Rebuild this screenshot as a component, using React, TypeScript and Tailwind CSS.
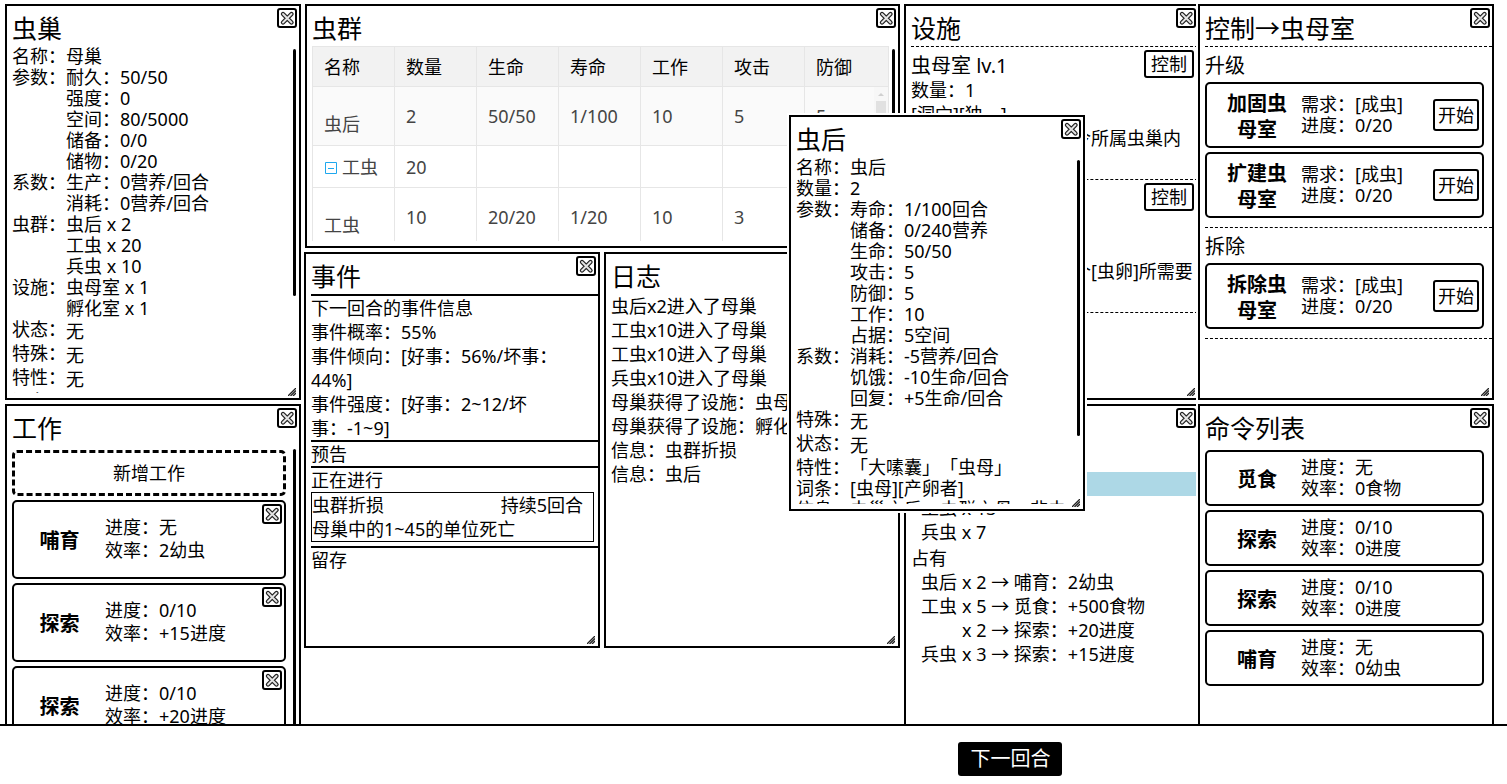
import { ReactNode } from "react";
import { clsx } from "clsx";

function CloseButton({ label }: { label: string }) {
  return (
    <button
      type="button"
      aria-label={label}
      className="absolute top-0.5 right-0.5 flex size-5 items-center justify-center rounded-[3px] border-2 border-black bg-white"
    >
      <svg viewBox="0 0 16 16" className="size-4 shrink-0" fill="none" strokeLinecap="round">
        <path d="M4 4L12.5 12.5M12.5 4L4 12.5" stroke="#222222" strokeWidth="4.4" />
        <path d="M4 4L12.5 12.5M12.5 4L4 12.5" stroke="#e4e4e4" strokeWidth="1.9" />
      </svg>
    </button>
  );
}

function ResizeGrip() {
  return (
    <svg viewBox="0 0 8 8" className="absolute right-[3px] bottom-[2px] size-2" stroke="#222222" strokeWidth="1.3">
      <path d="M0 8L8 0M2.5 8L8 2.5M5 8L8 5" />
    </svg>
  );
}

type WindowProps = {
  title?: string;
  place: string;
  thumb?: string;
  children: ReactNode;
};

function Window({ title, place, thumb, children }: WindowProps) {
  return (
    <section
      className={clsx(
        "absolute flex flex-col overflow-hidden border-2 border-black bg-white py-[5px] pl-[5px] shadow-[0_0_0_2px_white]",
        place,
      )}
    >
      <h2 className="h-[35px] shrink-0 text-[25px] leading-[34px]">{title}</h2>
      <div className="min-h-0 flex-1 overflow-hidden">{children}</div>
      {thumb && <div className={clsx("absolute top-[43px] right-[3px] w-[3px] rounded-full bg-black", thumb)} />}
      <CloseButton label="关闭" />
      <ResizeGrip />
    </section>
  );
}

type Entry = { label: string; lines: string[]; tall?: boolean };

const nestEntries: Entry[] = [
  { label: "名称", lines: ["母巢"] },
  { label: "参数", lines: ["耐久：50/50", "强度：0", "空间：80/5000", "储备：0/0", "储物：0/20"] },
  { label: "系数", lines: ["生产：0营养/回合", "消耗：0营养/回合"] },
  { label: "虫群", lines: ["虫后 x 2", "工虫 x 20", "兵虫 x 10"] },
  { label: "设施", lines: ["虫母室 x 1", "孵化室 x 1"] },
  { label: "状态", lines: ["无"], tall: true },
  { label: "特殊", lines: ["无"], tall: true },
  { label: "特性", lines: ["无"], tall: true },
  { label: "词条", lines: ["无"], tall: true },
];

const queenEntries: Entry[] = [
  { label: "名称", lines: ["虫后"] },
  { label: "数量", lines: ["2"] },
  {
    label: "参数",
    lines: ["寿命：1/100回合", "储备：0/240营养", "生命：50/50", "攻击：5", "防御：5", "工作：10", "占据：5空间"],
  },
  { label: "系数", lines: ["消耗：-5营养/回合", "饥饿：-10生命/回合", "回复：+5生命/回合"] },
  { label: "特殊", lines: ["无"], tall: true },
  { label: "状态", lines: ["无"], tall: true },
  { label: "特性", lines: ["「大嗉囊」「虫母」"] },
  { label: "词条", lines: ["[虫母][产卵者]"] },
  { label: "信息", lines: ["虫巢之后，虫群之母，非虫"] },
];

function EntryList({ entries }: { entries: Entry[] }) {
  return (
    <dl className="leading-[21px] whitespace-nowrap [text-spacing-trim:space-all]">
      {entries.map((entry) => (
        <div key={entry.label} className="flex">
          <dt className="w-[54px] shrink-0">{entry.label}：</dt>
          <dd className={clsx(entry.tall && "leading-6")}>
            {entry.lines.map((line) => (
              <div key={line}>{line}</div>
            ))}
          </dd>
        </div>
      ))}
    </dl>
  );
}

const swarmHead = ["名称", "数量", "生命", "寿命", "工作", "攻击", "防御"];

function SwarmRow({ cells, shaded }: { cells: string[]; shaded?: boolean }) {
  return (
    <tr className={clsx("h-[59px]", shaded && "bg-[#fafafa]")}>
      {cells.map((text, i) => (
        <td key={i} className={clsx("border border-[#e6e6e6] px-[11px] pb-0", i === 0 ? "pt-4" : "pt-0")}>
          {text}
        </td>
      ))}
    </tr>
  );
}

function SwarmTable() {
  return (
    <div className="relative mr-[5px] h-full overflow-hidden">
      <table className="w-[577px] table-fixed border-collapse text-[#444444]">
        <colgroup>
          {swarmHead.map((name, i) => (
            <col key={name} className={i < 6 ? "w-[82px]" : ""} />
          ))}
        </colgroup>
        <thead className="bg-[#f2f2f2] text-black">
          <tr className="h-10">
            {swarmHead.map((name) => (
              <th key={name} className="border border-[#e6e6e6] px-[11px] py-0 text-left font-normal">
                {name}
              </th>
            ))}
          </tr>
        </thead>
        <tbody>
          <SwarmRow cells={["虫后", "2", "50/50", "1/100", "10", "5", "5"]} shaded />
          <tr className="h-[42px]">
            {["工虫", "20", "", "", "", "", ""].map((text, i) => (
              <td key={i} className="border border-[#e6e6e6] px-[11px] py-0">
                {i === 0 ? (
                  <span className="flex items-center gap-[5px] whitespace-nowrap">
                    <svg viewBox="0 0 13 13" className="mt-1 size-[13px] shrink-0" fill="none" stroke="#1fa8ee">
                      <path d="M1.5 0.5H12.5V11.5H1.5ZM4 6.5H10" />
                    </svg>
                    {text}
                  </span>
                ) : (
                  text
                )}
              </td>
            ))}
          </tr>
          <SwarmRow cells={["工虫", "10", "20/20", "1/20", "10", "3", "3"]} />
        </tbody>
      </table>
      <div className="absolute top-[41px] left-[562px] flex h-full w-3.5 flex-col items-center bg-[#f7f7f7]">
        <svg viewBox="0 0 14 14" className="size-3.5" fill="#d0d0d0">
          <path d="M4 9L7 6L10 9Z" />
        </svg>
        <div className="h-10 w-2.5 bg-[#e1e1e1]" />
      </div>
    </div>
  );
}

function Facility({ name, tags, effect }: { name: string; tags: string; effect: string }) {
  return (
    <article className="relative h-[133px] border-t border-dashed border-black pt-[7px] leading-6 whitespace-nowrap">
      <h3 className="text-xl leading-6">{name}</h3>
      <p>数量：1</p>
      <p>{tags}</p>
      <p>{effect}</p>
      <button
        type="button"
        className="absolute top-[3px] right-1 h-7 rounded-[3px] border-2 border-black bg-white px-[5px] leading-5"
      >
        控制
      </button>
    </article>
  );
}

function OrderCard({ name, lines, action }: { name: string; lines: string[]; action?: string }) {
  return (
    <article
      className={clsx(
        "mt-1 mr-2 flex items-center rounded-[5px] border-2 border-black",
        action ? "h-[66px]" : "h-14",
      )}
    >
      <h4 className="ml-5 w-[60px] pt-[3px] text-center text-xl leading-[26px] font-bold">{name}</h4>
      <div className="ml-3.5 leading-[21px]">
        {lines.map((line) => (
          <div key={line}>{line}</div>
        ))}
      </div>
      {action && (
        <button type="button" className="mr-[3px] ml-auto h-8 rounded-[3px] border-2 border-black px-[3px] leading-6">
          {action}
        </button>
      )}
    </article>
  );
}

function ControlSection({ title, names }: { title: string; names: string[] }) {
  return (
    <section className="border-t border-dashed border-black pt-[7px] pb-[9px]">
      <h3 className="text-xl leading-6">{title}</h3>
      {names.map((name) => (
        <OrderCard key={name} name={name} lines={["需求：[成虫]", "进度：0/20"]} action="开始" />
      ))}
    </section>
  );
}

function WorkCard({ name, progress, rate }: { name: string; progress: string; rate: string }) {
  return (
    <article className="relative mt-1 flex h-[79px] items-center rounded-[5px] border-2 border-black">
      <h4 className="w-[91px] pt-[3px] text-center text-xl font-bold">{name}</h4>
      <div className="pb-px leading-[23px]">
        <div>进度：{progress}</div>
        <div>效率：{rate}</div>
      </div>
      <CloseButton label="取消工作" />
    </article>
  );
}

const logLines = [
  "虫后x2进入了母巢",
  "工虫x10进入了母巢",
  "工虫x10进入了母巢",
  "兵虫x10进入了母巢",
  "母巢获得了设施：虫母室",
  "母巢获得了设施：孵化室",
  "信息：虫群折损",
  "信息：虫后",
];

const assigned = [
  ["虫后", "x 2 → 哺育：2幼虫"],
  ["工虫", "x 5 → 觅食：+500食物"],
  ["", "x 2 → 探索：+20进度"],
  ["兵虫", "x 3 → 探索：+15进度"],
];

export default function App() {
  return (
    <div className="flex h-screen flex-col bg-white font-['Noto_Sans','Noto_Sans_CJK_SC',sans-serif] text-lg leading-6 font-normal text-black">
      <main className="relative min-h-0 flex-1 overflow-hidden">
        <Window title="虫巢" place="left-[5px] top-1 w-[296px] h-[396px]" thumb="h-[247px]">
          <EntryList entries={nestEntries} />
        </Window>

        <Window title="虫群" place="left-[305px] top-1 w-[595px] h-[244px]" thumb="h-[160px]">
          <SwarmTable />
        </Window>

        <Window title="事件" place="left-[304px] top-[252px] w-[296px] h-[396px]">
          <div className="border-t-2 border-black">
            <p>下一回合的事件信息</p>
            <p>事件概率：55%</p>
            <p>
              事件倾向：[好事：56%/坏事：
              <br />
              44%]
            </p>
            <p>
              事件强度：[好事：2~12/坏
              <br />
              事：-1~9]
            </p>
          </div>
          <div className="border-t-2 border-black">预告</div>
          <div className="border-t-2 border-black pb-1">
            <p>正在进行</p>
            <div className="mr-1 border border-black pr-2.5">
              <div className="flex justify-between">
                <span>虫群折损</span>
                <span>持续5回合</span>
              </div>
              <p>母巢中的1~45的单位死亡</p>
            </div>
          </div>
          <div className="border-t-2 border-black">留存</div>
        </Window>

        <Window title="日志" place="left-[604px] top-[252px] w-[296px] h-[396px]">
          {logLines.map((line, i) => (
            <p key={i}>{line}</p>
          ))}
        </Window>

        <Window title="设施" place="left-[904px] top-1 w-[296px] h-[396px]">
          <Facility name="虫母室 lv.1" tags="[洞穴][独一]" effect="效果：虫母可用来命令所属虫巢内" />
          <Facility name="孵化室 lv.1" tags="[洞穴]" effect="效果：减少孵化每一个[虫卵]所需要" />
          <div className="border-t border-dashed border-black" />
        </Window>

        <Window place="left-[904px] top-[404px] w-[296px] h-[396px]">
          <h3 className="pt-0.5">空闲</h3>
          <p className="bg-[#add8e6] pl-2.5">虫后 x 0</p>
          <p className="pl-2.5">工虫 x 13</p>
          <p className="pl-2.5">兵虫 x 7</p>
          <h3 className="pt-0.5">占有</h3>
          {assigned.map(([unit, job]) => (
            <div key={unit + job} className="flex gap-[5px] pl-2.5 whitespace-nowrap">
              <span className="w-9">{unit}</span>
              <span>{job}</span>
            </div>
          ))}
        </Window>

        <Window title="控制→虫母室" place="left-[1198px] top-1 w-[296px] h-[396px]">
          <ControlSection title="升级" names={["加固虫母室", "扩建虫母室"]} />
          <ControlSection title="拆除" names={["拆除虫母室"]} />
          <div className="border-t border-dashed border-black" />
        </Window>

        <Window title="工作" place="left-[5px] top-[404px] w-[296px] h-[396px]" thumb="h-[320px]">
          <div className="mr-[13px]">
            <button type="button" className="mt-1 block h-[46px] w-full rounded-[5px] border-3 border-dashed border-black">
              新增工作
            </button>
            <WorkCard name="哺育" progress="无" rate="2幼虫" />
            <WorkCard name="探索" progress="0/10" rate="+15进度" />
            <WorkCard name="探索" progress="0/10" rate="+20进度" />
          </div>
        </Window>

        <Window title="命令列表" place="left-[1198px] top-[404px] w-[296px] h-[396px]">
          <OrderCard name="觅食" lines={["进度：无", "效率：0食物"]} />
          <OrderCard name="探索" lines={["进度：0/10", "效率：0进度"]} />
          <OrderCard name="探索" lines={["进度：0/10", "效率：0进度"]} />
          <OrderCard name="哺育" lines={["进度：无", "效率：0幼虫"]} />
        </Window>

        <Window title="虫后" place="left-[789px] top-[115px] w-[296px] h-[396px]" thumb="h-[276px]">
          <EntryList entries={queenEntries} />
        </Window>
      </main>

      <footer className="flex shrink-0 border-t-2 border-black pt-4 pb-2">
        <button type="button" className="ml-[63.6%] h-[34px] rounded-[3px] bg-black px-3 text-xl text-white">
          下一回合
        </button>
      </footer>
    </div>
  );
}
